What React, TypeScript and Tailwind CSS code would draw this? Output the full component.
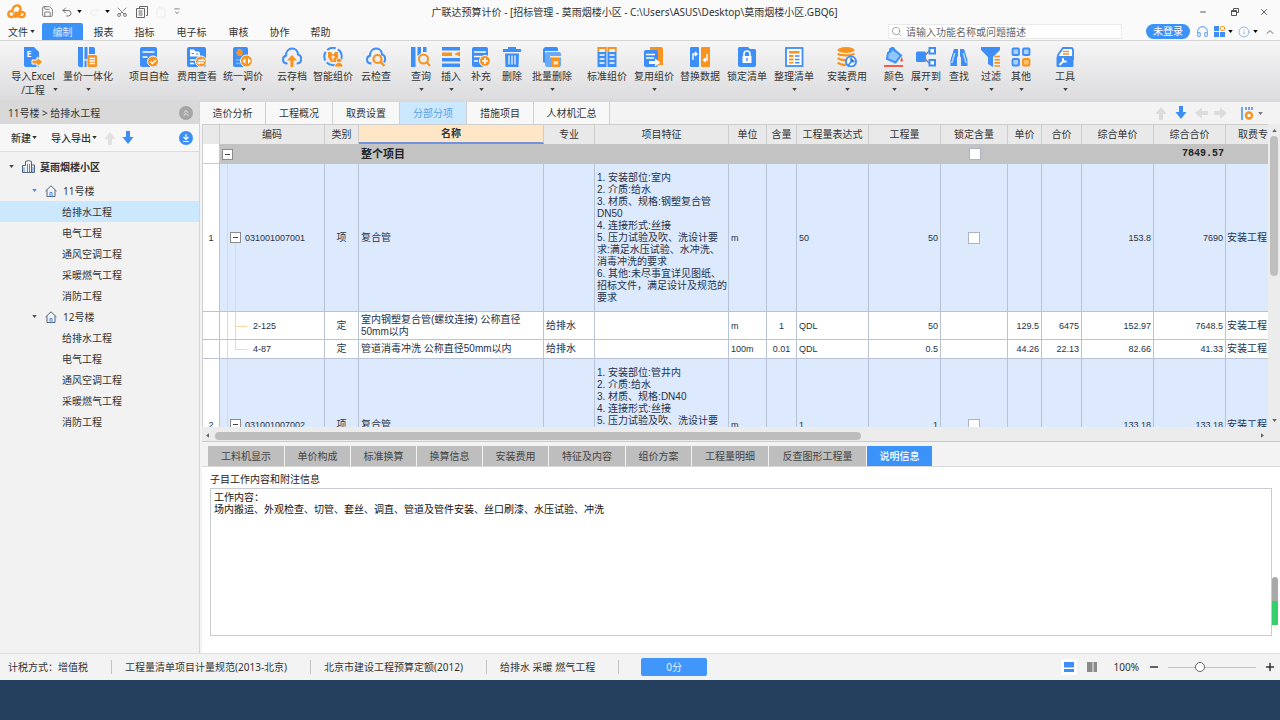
import type { ReactNode } from "react";
import clsx from "clsx";
import { ChevronUp, ChevronsUp, Clipboard, Headphones, Info, Minus, Plus, Redo2, Save, Scissors, Search, Undo2, X } from "lucide-react";

const B = "#3d8ef6";
const O = "#f7931e";

const icons: Record<string, ReactNode> = {
  excel: (
    <>
      <path fill={B} d="M1 0h10l5 5v15H3a2 2 0 0 1-2-2z" />
      <text x="3.500" y="10" fill="#fff" fontSize="9" fontWeight="700">E</text>
      <path fill={O} stroke="#fff" strokeWidth="1" d="M9 13h5v-3l6 5-6 5v-3H9z" />
    </>
  ),
  integrate: (
    <>
      <path fill={B} d="M0 0h5v20H2a2 2 0 0 1-2-2zM6.500 0h3v12h-3zM11 0h4a2 2 0 0 1 2 2v5h-6zM6.500 13.500h2V20h-2z" />
      <rect x="9.500" y="8" width="9.500" height="12" rx="1.500" fill={O} />
      <path stroke="#fff" strokeWidth="1.400" d="M11.500 11.500h5.500M11.500 14h5.500M11.500 16.500h5.500" />
    </>
  ),
  check: (
    <>
      <rect x="1" y="0" width="17" height="20" rx="2" fill={B} />
      <path stroke="#fff" strokeWidth="1.500" d="M3.500 5h12M3.500 10h5" />
      <circle cx="14" cy="14.500" r="5.500" fill={O} stroke="#fff" />
      <path stroke="#fff" strokeWidth="1.500" fill="none" d="m11.500 14.500 2 2 3.500-3.500" />
    </>
  ),
  feeView: (
    <>
      <rect x="0" y="0" width="19" height="20" rx="2" fill={B} />
      <path fill="#fff" d="M3 2.500h4l1.500 2H12l1 2v3H3z" />
      <path stroke={B} d="M4.500 6.500h2.500M9 7h2.500" />
      <path stroke="#fff" strokeWidth="1.300" d="M3 13h5M3 16.500h4" />
      <circle cx="14" cy="14.500" r="5.500" fill={O} stroke="#fff" />
      <path stroke="#fff" strokeWidth="1.300" fill="none" d="M11 13.500h6l-2-1.500M17 15.800h-6l2 1.500" />
    </>
  ),
  adjust: (
    <>
      <rect x="0" y="0" width="15" height="20" rx="2" fill={B} />
      <path fill={O} d="M5 2h3l2 3-1 4H5L3 6z" />
      <path stroke="#7fb6fa" strokeWidth="1.300" d="M3 13h4M3 16.500h4" />
      <circle cx="13.500" cy="14" r="6" fill={O} stroke="#fff" />
      <path fill="#fff" d="m12.500 11-3 3 3 3zM15 11l3 3-3 3z" />
    </>
  ),
  cloudUp: (
    <>
      <path stroke={B} strokeWidth="2" fill="none" d="M5.500 16.500C3 16.500 1 15 1 12.500 1 10.500 2.300 9 4 8.700 4 4.500 6.500 1.500 10.200 1.500c3.300 0 5.600 2.500 5.800 6 2 .4 3.200 2.200 3.200 4.300 0 2.700-1.700 4.700-4.500 4.700" />
      <path fill={O} d="m10 8 5 5.500h-3.500V20h-3v-6.500H5z" />
    </>
  ),
  smart: (
    <>
      <circle cx="10" cy="9.500" r="8.700" stroke={B} strokeWidth="2" fill="none" strokeDasharray="9 2.500" />
      <path fill={O} d="M5 5h3l2 3 2-3h3v5l-2 5H8L5 10z" />
      <path stroke="#fff" d="M8 10h4M10 8.500v5" />
      <circle cx="16" cy="13.500" r="2.500" fill={O} stroke="#fff" strokeWidth=".7" />
      <path fill={O} stroke="#fff" strokeWidth=".7" d="M11.500 20c0-3 2-4.500 4.500-4.500s4 1.500 4 4.500z" />
    </>
  ),
  cloudSearch: (
    <>
      <path stroke={B} strokeWidth="2" fill="none" d="M5.500 16.500C3 16.500 1 15 1 12.500 1 10.500 2.300 9 4 8.700 4 4.500 6.500 1.500 10.200 1.500c3.300 0 5.600 2.500 5.800 6 2 .4 3.200 2.200 3.200 4.300 0 1.500-.5 2.700-1.500 3.500" />
      <circle cx="11.500" cy="12" r="4" stroke={O} strokeWidth="2.200" fill="none" />
      <path stroke={O} strokeWidth="2.400" d="m14.500 15 4 4" />
    </>
  ),
  query: (
    <>
      <path fill={B} d="M0 0h4.500v20H0zM6.500 0h3.500v6l-3.500 3zM12 0h3.500v5H12z" />
      <circle cx="12.500" cy="12" r="4.500" stroke={O} strokeWidth="2" fill="none" />
      <path stroke={O} strokeWidth="2" d="m16 15.500 3 3.500" />
    </>
  ),
  insert: (
    <>
      <path fill={B} d="M1 0h18v3.500H1zM1 11h18v3.500H1zM1 16.500h18V20H1z" />
      <path fill={O} d="M1 5.500h10V9H1zM19 4.500v5l-6-2.500z" />
    </>
  ),
  supplement: (
    <>
      <rect x="1" y="0" width="16" height="20" rx="2" fill={B} />
      <path stroke="#fff" strokeWidth="1.500" d="M3 5h12M3 9.500h7M3 14h4" />
      <circle cx="14" cy="14" r="5.500" fill={O} stroke="#fff" />
      <path stroke="#fff" strokeWidth="1.700" d="M14 11v6M11 14h6" />
    </>
  ),
  trash: (
    <>
      <path fill={B} d="M6 0h8v2h5v3H1V2h5zM3 6.500h14l-.5 13.500h-13z" />
      <path stroke="#d6e7fd" strokeWidth="1.500" d="M7 8.500v9M10 8.500v9M13 8.500v9" />
    </>
  ),
  batchDelete: (
    <>
      <path fill={B} d="M3 0h11a2 2 0 0 1 2 2v2H3v12l-2-1V2z" />
      <rect x="3" y="5" width="16" height="15" rx="2" fill="#6aabf8" />
      <rect x="9" y="10.500" width="9" height="9.500" rx="1" fill={O} />
      <path fill="#ffe6c6" d="M11.500 14h4.500v3.500h-4.500zM8 9h11v1.500H8z" />
    </>
  ),
  standard: (
    <>
      <path fill={B} d="M.500 5H9.500v15H.500zM10.500 5h9v15h-9z" />
      <path stroke={O} strokeWidth="1.800" fill="none" d="M1.300 5V1h7.500v4M11.300 5V1h7.500v4" />
      <path stroke="#fff" strokeWidth="1.600" d="M2.500 8h5M2.500 12h5M2.500 16h5M12.500 8h5M12.500 12h5M12.500 16h5" />
    </>
  ),
  reuse: (
    <>
      <path fill={O} d="M6 0h11a2 2 0 0 1 2 2v16h-5V4H6z" />
      <rect x="0" y="3" width="14" height="17" rx="2" fill={B} />
      <path stroke="#fff" strokeWidth="1.400" d="M2 7.500h9M2 11h8" />
      <path fill="#fff" d="M5 14h6v-2.500l5.500 4-5.500 4V17H5z" />
    </>
  ),
  replace: (
    <>
      <rect x="0" y="0" width="9" height="20" rx="1" fill={B} />
      <rect x="11" y="0" width="9" height="20" rx="1" fill={O} />
      <path stroke="#fff" strokeWidth="1.400" fill="none" d="M3 13V7h3.500M5 5l2 2-2 2M17 7v6h-3.500M15.500 11l-2 2 2 2" />
    </>
  ),
  lock: (
    <>
      <path fill={B} d="M2 0h9l2 2h5l1 1v15a2 2 0 0 1-2 2H3a2 2 0 0 1-2-2V1z" />
      <path fill="#fff" d="M5.500 9h9v7h-9z" />
      <path stroke="#fff" strokeWidth="1.600" fill="none" d="M7 9V7a3 3 0 0 1 6 0v2" />
      <path stroke={B} strokeWidth="1.400" d="M10 11v3" />
    </>
  ),
  arrange: (
    <>
      <rect x="2" y="1" width="16.500" height="18" stroke={B} strokeWidth="1.800" fill="#fff" />
      <path fill={O} d="M5 4h10.500v2.500H5zM5 8h4.500v2H5zM5 11.500h4.500v2H5zM5 15h4.500v1.500H5z" />
      <path stroke={B} strokeWidth="1.500" d="M11 9h4.500M11 12.500h4.500M11 15.800h4.500" />
    </>
  ),
  install: (
    <>
      <ellipse cx="9" cy="3" rx="8.500" ry="3" fill={O} />
      <path stroke={O} strokeWidth="2.300" fill="none" d="M.800 6.500c2 2.500 14 2.500 16.500 0M.800 11c2 2 6 2.200 9 2M.800 15.500c2 2 5 2.500 8 2.500" />
      <circle cx="14" cy="14.500" r="5" stroke={B} strokeWidth="2" fill="#fff" />
      <path stroke={B} strokeWidth="1.800" d="m14.500 14.500-4 4.500M14 11v3.500h3.500" />
    </>
  ),
  color: (
    <>
      <path fill="#8ec8ff" stroke={B} strokeWidth="2" d="m9 2 8 6.500-5.500 7L3 12l1-6z" />
      <path stroke={B} strokeWidth="1.800" fill="none" d="M6 6V2l3-1.500L12 5" />
      <path fill="#f2604b" d="M17.500 10c1 1.500 1.500 2.500 1.500 3.500a1.300 1.300 0 0 1-2.600 0c0-1 .5-2 1.100-3.500zM0 18h19v2H0z" />
    </>
  ),
  expand: (
    <>
      <path stroke="#6d7b8c" strokeWidth="1.200" fill="none" d="M8 9.500 14 3M8 11l6 6" />
      <rect x="0" y="4.500" width="10" height="10.500" rx="1.500" fill={B} />
      <rect x="13.500" y="1" width="5.500" height="5.500" stroke={B} strokeWidth="2" fill="#fff" />
      <rect x="13.500" y="13" width="5.500" height="5.500" stroke={B} strokeWidth="2" fill="#fff" />
    </>
  ),
  find: (
    <>
      <path fill={B} d="M5 2h4v7l-1 2v8H1.500v-6zM11 2h4l3.500 11v6H12v-8l-1-2z" />
      <path fill="#bcd9fb" d="m5 6-3 10h1.500L6.500 6zM15 6l3 10h-1.500L13.500 6z" />
    </>
  ),
  filter: (
    <>
      <path fill={B} d="M0 0h19v3l-7 7v10l-5-3v-7L0 3z" />
      <path stroke={O} strokeWidth="1.600" d="M13.500 9.500H19M13.500 12.700H19M13.500 15.900H19M13.500 19H19" />
    </>
  ),
  other: (
    <>
      <rect x="1.500" y="1.500" width="6.500" height="6.500" rx="1" fill="#a8d1ff" stroke={B} strokeWidth="1.800" />
      <rect x="12" y="1.500" width="6.500" height="6.500" rx="1" fill="#a8d1ff" stroke={B} strokeWidth="1.800" />
      <rect x="1.500" y="12" width="6.500" height="6.500" rx="1" fill="#a8d1ff" stroke={B} strokeWidth="1.800" />
      <rect x="12" y="12" width="6.500" height="6.500" rx="1" fill="#fcbf6b" stroke={O} strokeWidth="1.800" />
    </>
  ),
  tool: (
    <>
      <path stroke={B} strokeWidth="1.800" fill="#fff" d="m3 8 5-7h8a2 2 0 0 1 2 2v9H3z" />
      <path stroke={O} strokeWidth="1.400" d="M8 4.500h6M8 7h6" />
      <rect x="1.500" y="9" width="17" height="11" rx="1.500" fill={B} />
      <path stroke="#fff" strokeWidth="1.800" fill="none" d="m4.500 18 4-4M8 11v3.500h3.500" />
    </>
  ),
};

type Tool = [icon: string, label: string, width: string, caret?: boolean];

const toolGroups: { margin: string; tools: Tool[] }[] = [
  { margin: "ml-2", tools: [["excel", "导入Excel /工程", "w-[50px]", true], ["integrate", "量价一体化", "w-[60px]", true]] },
  { margin: "ml-[7px]", tools: [["check", "项目自检", "w-12"], ["feeView", "费用查看", "w-12"], ["adjust", "统一调价", "w-11", true]] },
  { margin: "ml-[9px]", tools: [["cloudUp", "云存档", "w-9", true], ["smart", "智能组价", "w-[46px]"], ["cloudSearch", "云检查", "w-10"]] },
  {
    margin: "ml-2.5",
    tools: [["query", "查询", "w-[30px]", true], ["insert", "插入", "w-[30px]", true], ["supplement", "补充", "w-[30px]", true], ["trash", "删除", "w-8"], ["batchDelete", "批量删除", "w-12", true]],
  },
  {
    margin: "ml-[7px]",
    tools: [["standard", "标准组价", "w-12"], ["reuse", "复用组价", "w-[46px]", true], ["replace", "替换数据", "w-[46px]"], ["lock", "锁定清单", "w-12"], ["arrange", "整理清单", "w-[46px]", true]],
  },
  { margin: "ml-2", tools: [["install", "安装费用", "w-11", true]] },
  {
    margin: "ml-[9px]",
    tools: [["color", "颜色", "w-8", true], ["expand", "展开到", "w-8", true], ["find", "查找", "w-[34px]"], ["filter", "过滤", "w-[30px]", true], ["other", "其他", "w-[30px]", true]],
  },
  { margin: "ml-3.5", tools: [["tool", "工具", "w-[30px]", true]] },
];

const menus = ["编制", "报表", "指标", "电子标", "审核", "协作", "帮助"];
const pageTabs = ["造价分析", "工程概况", "取费设置", "分部分项", "措施项目", "人材机汇总"];
const detailTabs = ["工料机显示", "单价构成", "标准换算", "换算信息", "安装费用", "特征及内容", "组价方案", "工程量明细", "反查图形工程量", "说明信息"];
const works = ["给排水工程", "电气工程", "通风空调工程", "采暖燃气工程", "消防工程"];

const columns: [title: string, width: string][] = [
  ["", "w-[17px]"],
  ["编码", "w-[105px]"],
  ["类别", "w-[34px]"],
  ["名称", "w-[185px]"],
  ["专业", "w-[51px]"],
  ["项目特征", "w-[134px]"],
  ["单位", "w-[38px]"],
  ["含量", "w-[30px]"],
  ["工程量表达式", "w-[72px]"],
  ["工程量", "w-[72px]"],
  ["锁定含量", "w-[67px]"],
  ["单价", "w-[34px]"],
  ["合价", "w-10"],
  ["综合单价", "w-[72px]"],
  ["综合合价", "w-[72px]"],
  ["取费专业", ""],
];

interface Row {
  no?: string;
  code: string;
  kind: string;
  name: string;
  major?: string;
  feature?: string;
  unit: string;
  content?: string;
  expr: string;
  qty: string;
  price?: string;
  total?: string;
  unitPrice: string;
  sum: string;
  height: string;
}

const rows: Row[] = [
  {
    no: "1", code: "031001007001", kind: "项", name: "复合管", unit: "m", expr: "50", qty: "50", unitPrice: "153.8", sum: "7690", height: "h-[148px]",
    feature: "1. 安装部位:室内\n2. 介质:给水\n3. 材质、规格:钢塑复合管\nDN50\n4. 连接形式:丝接\n5. 压力试验及吹、洗设计要\n求:满足水压试验、水冲洗、\n消毒冲洗的要求\n6. 其他:未尽事宜详见图纸、\n招标文件，满足设计及规范的\n要求",
  },
  { code: "2-125", kind: "定", name: "室内钢塑复合管(螺纹连接) 公称直径\n50mm以内", major: "给排水", unit: "m", content: "1", expr: "QDL", qty: "50", price: "129.5", total: "6475", unitPrice: "152.97", sum: "7648.5", height: "h-7" },
  { code: "4-87", kind: "定", name: "管道消毒冲洗 公称直径50mm以内", major: "给排水", unit: "100m", content: "0.01", expr: "QDL", qty: "0.5", price: "44.26", total: "22.13", unitPrice: "82.66", sum: "41.33", height: "h-[19px]" },
  {
    no: "2", code: "031001007002", kind: "项", name: "复合管", unit: "m", expr: "1", qty: "1", unitPrice: "133.18", sum: "133.18", height: "h-[132px]",
    feature: "1. 安装部位:管井内\n2. 介质:给水\n3. 材质、规格:DN40\n4. 连接形式:丝接\n5. 压力试验及吹、洗设计要\n求:满足水压试验、水冲洗、",
  },
];

function Caret({ className }: { className?: string }) {
  return (
    <svg viewBox="0 0 6 4" className={clsx("h-[3px] w-[5px] shrink-0", className)} fill="currentColor">
      <path d="M0 0h6L3 4z" />
    </svg>
  );
}

function Arrow({ className }: { className?: string }) {
  return (
    <svg viewBox="0 0 12 14" className={clsx("h-3.5 w-3 shrink-0", className)} fill="currentColor">
      <path d="M4 0h4v6h3.500L6 13 .500 6H4z" />
    </svg>
  );
}

function Toggle() {
  return (
    <button aria-label="折叠" className="relative z-10 flex size-[11px] shrink-0 items-center justify-center border border-[#8b8b8b] bg-white">
      <span className="h-px w-[5px] bg-[#444]" />
    </button>
  );
}

function Tick({ label }: { label: string }) {
  return <input type="checkbox" aria-label={label} className="mx-auto block size-3 appearance-none border border-[#a9b4c4] bg-white" />;
}

function TitleBar() {
  return (
    <header className="flex h-[23px] shrink-0 items-center">
      <div className="flex flex-1 items-center text-[#666]">
        <svg viewBox="0 0 19 15" className="ml-[7px] h-[15px] w-[19px]" fill="none" stroke={O} strokeWidth="2.400" strokeLinecap="round">
          <path d="M9 8.500 6.500 12C5 14 1.300 13 1.300 10S4 6.800 5.500 7.500C5 3 8.500 1 11 1.500s3.500 3.500 1.500 6L8.500 13M11 12.500l2.500-3.500c1.500-2 4.300-1 4.300 1.200S15.500 13.500 13.500 13" />
        </svg>
        <button aria-label="保存" className="ml-[15px]"><Save size={13} strokeWidth={1.5} /></button>
        <button aria-label="撤销" className="ml-[7px]"><Undo2 size={12} strokeWidth={1.8} /></button>
        <Caret className="ml-1 text-black" />
        <Redo2 size={11} className="ml-[7px] text-[#ececec]" />
        <Caret className="ml-[5px] text-black" />
        <button aria-label="剪切" className="ml-1.5"><Scissors size={12} strokeWidth={1.6} className="-rotate-90" /></button>
        <button aria-label="复制" className="ml-2">
          <svg viewBox="0 0 12 12" className="size-3" fill="none" stroke="currentColor">
            <path d="M3.500 2V.500h8v9H10M.500 2.500h8v9h-8zM2.500 5h4M2.500 7h4M2.500 9h4" />
          </svg>
        </button>
        <Clipboard size={12} className="ml-[7px] text-[#ececec]" />
        <svg viewBox="0 0 6 8" className="ml-[7px] h-[7px] w-1.5" fill="none" stroke="#777"><path d="M0 1h6M1 4l2 2.500L5 4" /></svg>
      </div>
      <h1 className="text-[10px] whitespace-nowrap text-[#333]">广联达预算计价 - [招标管理 - 莫雨烟楼小区 - C:\Users\ASUS\Desktop\莫雨烟楼小区.GBQ6]</h1>
      <div className="flex flex-1 items-center justify-end pr-[11px] text-[#555]">
        <button aria-label="最小化"><Minus size={8} strokeWidth={3} /></button>
        <button aria-label="还原" className="ml-6">
          <svg viewBox="0 0 8 8" className="size-2" fill="none" stroke="currentColor"><path d="M2.500 2.500v-2h5v4h-2M.500 2.500h5v5h-5zM.500 3.500h5" /></svg>
        </button>
        <button aria-label="关闭" className="ml-5"><X size={10} strokeWidth={2.2} /></button>
      </div>
    </header>
  );
}

function MenuBar() {
  return (
    <nav className="flex h-[18px] shrink-0 items-stretch border-b border-[#d5d5d5]">
      <button className="flex w-[42px] items-center gap-0.5 pl-2">文件<Caret className="h-0.5 w-1" /></button>
      {menus.map((menu) => (
        <button
          key={menu}
          className={clsx(menu === "电子标" ? "w-[53px]" : "w-[41px]", menu === "编制" && "rounded-t-[2px] bg-[#3b92f8] text-[#d8eaff]")}
        >
          {menu}
        </button>
      ))}
      <div className="ml-auto flex items-center pr-1">
        <label className="flex h-[15px] w-[234px] items-center gap-1 border border-[#ebebeb] bg-white pl-0.5 text-[#8a8a8a]">
          <Search size={11} strokeWidth={1.6} />
          <input className="min-w-0 flex-1 outline-none placeholder:text-[#666]" placeholder="请输入功能名称或问题描述" aria-label="搜索" />
        </label>
        <button className="ml-6 h-[15px] w-11 rounded-full bg-[#3b92f8] leading-[15px] text-white">未登录</button>
        <button aria-label="客服" className="ml-[6px] text-[#6fa9ee]"><Headphones size={13} strokeWidth={2} /></button>
        <svg viewBox="0 0 11 11" className="ml-[5px] size-[11px]">
          <path fill={B} d="M0 0h5v5H0zM0 6h5v5H0zM6 6h5v5H6z" />
          <rect x="6.500" y=".500" width="4" height="4" rx="1" fill="none" stroke={O} />
        </svg>
        <Caret className="ml-[3px] text-black" />
        <button aria-label="信息" className="ml-[5px] text-[#7aa9dd]"><Info size={12} strokeWidth={1.6} /></button>
        <Caret className="ml-[3px] text-black" />
        <ChevronUp size={12} className="ml-1.5 text-[#666]" />
      </div>
    </nav>
  );
}

function Ribbon() {
  return (
    <div className="flex h-[61px] shrink-0 items-start overflow-hidden border-b-2 border-[#d9d9d9] bg-gradient-to-b from-[#f6f6f7] to-[#dcdcde] pt-1.5">
      {toolGroups.map((group) => (
        <div key={group.tools[0][0]} className={clsx("flex shrink-0 items-start", group.margin)}>
          {group.tools.map(([icon, label, width, caret]) => (
            <button key={icon} className={clsx("relative flex flex-col items-center text-[#333]", width)}>
              <svg viewBox="0 0 20 20" className="size-5">{icons[icon]}</svg>
              <span className={clsx("mt-0.5 leading-[14px]", icon === "excel" ? "w-[46px]" : "whitespace-nowrap")}>{label}</span>
              {caret && <Caret className={clsx("absolute top-[41px] h-0.5 w-1 text-[#444]", icon === "excel" && "right-0")} />}
            </button>
          ))}
        </div>
      ))}
    </div>
  );
}

function Building({ first }: { first?: boolean }) {
  return (
    <li>
      <button className="flex h-[21px] w-full items-center pl-8">
        <Caret className={first ? "text-[#3b8ef5]" : "text-[#555]"} />
        <svg viewBox="0 0 12 12" className="mr-1.5 ml-2 size-3" fill="none" stroke="#56657a">
          <path d="M.500 6 6 .800 11.500 6M2 5v6.500h8V5" />
          <path stroke={B} d="M5 11.500V7.500h2v4" />
        </svg>
        <span>{first ? "11号楼" : "12号楼"}</span>
      </button>
      <ul>
        {works.map((work, i) => (
          <li key={work}>
            <button className={clsx("block h-[21px] w-full pl-[62px] text-left", first && i === 0 && "bg-[#cce8ff]")}>{work}</button>
          </li>
        ))}
      </ul>
    </li>
  );
}

function Sidebar() {
  return (
    <aside className="flex w-[200px] shrink-0 flex-col border-r border-[#d4d4d4] bg-[#f2f2f3]">
      <div className="flex h-[22px] items-center justify-between bg-[#d9d9da] pr-1.5 pl-2">
        <span>11号楼 &gt; 给排水工程</span>
        <button aria-label="收起" className="flex size-3.5 items-center justify-center rounded-full bg-[#a5a5a5] text-white"><ChevronsUp size={10} /></button>
      </div>
      <div className="flex h-7 items-center border-b border-[#dcdcdc] bg-[#f7f7f8] pr-1.5 pl-[11px]">
        <button className="flex items-center gap-px font-medium">新建<Caret className="h-0.5 w-1" /></button>
        <button className="ml-3.5 flex items-center gap-px font-medium">导入导出<Caret className="h-0.5 w-1" /></button>
        <Arrow className="ml-[7px] rotate-180 text-[#e2e2e2]" />
        <Arrow className="ml-1.5 text-[#3b8ef5]" />
        <button aria-label="下载" className="ml-auto flex size-3.5 items-center justify-center rounded-full bg-[#3b8ef5] text-white">
          <svg viewBox="0 0 8 8" className="size-2" fill="none" stroke="currentColor" strokeWidth="1.200"><path d="M4 0v5M1.500 3 4 5.500 6.500 3M1 7.500h6" /></svg>
        </button>
      </div>
      <button className="flex h-7 items-center pt-px pl-[9px] font-bold">
        <Caret className="text-[#444]" />
        <svg viewBox="0 0 13 13" className="mr-[5px] ml-2 size-[13px]" fill="none" stroke="#56657a">
          <path d="M.500 12.500v-7h3V1.500L6.500.500l3 1v11M9.500 5h3v7.500H.500" />
          <path stroke={B} d="M5.500 4v8M7.500 4v8M2 7.500v5M11 7v5" />
        </svg>
        莫雨烟楼小区
      </button>
      <ul>
        <Building first />
        <Building />
      </ul>
    </aside>
  );
}

function PageTabs() {
  return (
    <div className="flex h-[22px] shrink-0 items-stretch bg-[#f3f3f3]">
      {pageTabs.map((tab, i) => (
        <button
          key={tab}
          className={clsx(
            "border-r border-[#cfcfcf]",
            i === 0 ? "w-[66px]" : tab.length > 4 ? "w-[76px]" : "w-[67px]",
            tab === "分部分项" ? "bg-[#cce8ff] text-[#5b9fe6]" : "bg-[#f8f8f8]",
          )}
        >
          {tab}
        </button>
      ))}
      <div className="ml-auto flex items-center pr-[17px] text-[#dcdcdc]">
        <Arrow className="rotate-180" />
        <Arrow className="ml-2 text-[#3b8ef5]" />
        <Arrow className="ml-2 rotate-90" />
        <Arrow className="ml-2 -rotate-90" />
        <svg viewBox="0 0 13 13" className="ml-[14px] size-[13px]">
          <path stroke={B} strokeWidth="1.500" d="M1 0v13M5 0v3M8 0v3M11 0v3" />
          <circle cx="8" cy="8.500" r="3" fill="#fff" stroke={O} strokeWidth="2.400" />
        </svg>
        <Caret className="ml-1 text-[#777]" />
      </div>
    </div>
  );
}

function QuotaRow({ row, last }: { row: Row; last?: boolean }) {
  const item = Boolean(row.no);
  const cell = "overflow-hidden border-r border-b border-[#b9c3d6] px-0.5 whitespace-pre";
  const number = clsx(cell, "text-right text-[9px]");
  return (
    <tr className={clsx(row.height, item ? "bg-[#dde9fc]" : "bg-white")}>
      <td className={clsx(cell, "bg-white text-center text-[9px]")}>{row.no}</td>
      <td className={clsx(cell, "relative text-[9px]")}>
        <span className="absolute inset-y-0 left-[7px] w-px bg-[#fbd59c]" />
        {item ? (
          <span className="flex items-center gap-1 pl-2">
            <span className="absolute top-1/2 bottom-0 left-[15px] w-px bg-[#fbd59c]" />
            <Toggle />
            {row.code}
          </span>
        ) : (
          <span className="block pl-[31px]">
            <span className={clsx("absolute top-0 left-[15px] w-px bg-[#fbd59c]", last ? "h-1/2" : "h-full")} />
            <span className="absolute top-1/2 left-[15px] h-px w-3 bg-[#fbd59c]" />
            {row.code}
          </span>
        )}
      </td>
      <td className={clsx(cell, "text-center")}>{row.kind}</td>
      <td className={cell}>{row.name}</td>
      <td className={cell}>{row.major}</td>
      <td className={clsx(cell, item && "pt-2 align-top")}>{row.feature}</td>
      <td className={clsx(cell, "text-[9px]")}>{row.unit}</td>
      <td className={clsx(cell, "text-center text-[9px]")}>{row.content}</td>
      <td className={clsx(cell, "text-[9px]")}>{row.expr}</td>
      <td className={number}>{row.qty}</td>
      <td className={cell}>{item && <Tick label={`锁定含量 ${row.code}`} />}</td>
      <td className={number}>{row.price}</td>
      <td className={number}>{row.total}</td>
      <td className={number}>{row.unitPrice}</td>
      <td className={number}>{row.sum}</td>
      <td className="overflow-hidden border-b border-[#b9c3d6] pl-px whitespace-nowrap">安装工程</td>
    </tr>
  );
}

function Grid() {
  return (
    <div className="ml-0.5 flex h-[318px] shrink-0 flex-col border-b border-[#c9c9c9] bg-[#ececec]">
      <div className="flex h-[303px]">
        <div className="min-w-0 flex-1 overflow-hidden border-l border-[#cfcfcf] bg-white">
          <table className="w-full table-fixed border-separate border-spacing-0 leading-3 text-[#26324a] [font-family:'Liberation_Sans','Noto_Sans_CJK_SC',sans-serif]">
            <colgroup>
              {columns.map(([title, width]) => <col key={title} className={width} />)}
            </colgroup>
            <thead>
              <tr className="h-5 bg-[#e9e9ea] text-[#333]">
                {columns.map(([title]) => (
                  <th
                    key={title}
                    className={clsx(
                      "overflow-hidden border-t border-r border-[#cdcdcd] whitespace-nowrap",
                      title === "名称" ? "border-b-2 border-b-[#6f93e0] bg-[#fee6c6] font-bold" : "font-normal",
                      title === "取费专业" && "border-r-0 pl-3 text-left",
                    )}
                  >
                    {title}
                  </th>
                ))}
              </tr>
            </thead>
            <tbody>
              <tr className="h-5 bg-[#c3c3c3] font-bold text-[#222]">
                <td className="border-r border-b border-[#c9c9c9] bg-white" />
                <td className="pl-0.5" colSpan={2}><Toggle /></td>
                <td className="pl-0.5 text-[11px]" colSpan={7}>整个项目</td>
                <td><Tick label="锁定含量 整个项目" /></td>
                <td className="pr-0.5 text-right [font-family:'Liberation_Mono',monospace]" colSpan={4}>7849.57</td>
                <td />
              </tr>
              {rows.map((row, i) => <QuotaRow key={row.code} row={row} last={i === 2} />)}
            </tbody>
          </table>
        </div>
        <div className="flex w-3 flex-col items-center justify-between py-[5px] text-[#666]">
          <Caret className="rotate-180" />
          <div className="mt-1 mb-auto h-[140px] w-2 rounded-full bg-[#bfbfbf]" />
          <Caret />
        </div>
      </div>
      <div className="mt-[3px] flex h-[11px] items-center pr-3 text-[#666]">
        <Caret className="mx-[3px] rotate-90" />
        <div className="flex h-2 flex-1 pl-0.5"><div className="w-[62%] rounded-sm bg-[#bdbdbd]" /></div>
        <Caret className="mx-[3px] -rotate-90" />
      </div>
    </div>
  );
}

function Details() {
  return (
    <section className="relative ml-0.5 flex min-h-0 flex-1 flex-col bg-white">
      <div className="flex h-[25px] shrink-0 items-end gap-px border-b border-[#d9d9d9] bg-[#f3f3f4] pl-1.5">
        {detailTabs.map((tab) => (
          <button
            key={tab}
            className={clsx(
              "h-5 shrink-0",
              tab.length === 7 ? "w-[97px]" : tab.length === 5 ? "w-[76px]" : "w-[65px]",
              tab === "说明信息" ? "bg-[#3b92f8] font-medium text-white" : "bg-[#bebebe] text-[#444]",
            )}
          >
            {tab}
          </button>
        ))}
      </div>
      <label htmlFor="note" className="pt-1 pl-2 leading-4 text-[#222]">子目工作内容和附注信息</label>
      <textarea
        id="note"
        readOnly
        className="mt-px mr-2 mb-[17px] ml-2 flex-1 resize-none border border-[#c8ccd2] px-[3px] py-0.5 leading-3 text-[#111] outline-none"
        defaultValue={"工作内容：\n场内搬运、外观检查、切管、套丝、调直、管道及管件安装、丝口刷漆、水压试验、冲洗"}
      />
      <div className="absolute right-0.5 bottom-7 h-12 w-1.5 rounded-t-full bg-gradient-to-b from-[#a9a9a9] from-50% to-[#35cf6b] to-50%" />
    </section>
  );
}

function StatusBar() {
  const separator = "ml-[23px] h-3.5 w-px bg-[#c4c4c4]";
  return (
    <footer className="flex h-[27px] shrink-0 items-center border-t border-[#dedede] bg-[#f3f3f4] pr-1 pl-2 whitespace-nowrap">
      <span>计税方式：增值税</span>
      <span className={clsx(separator, "mr-[13px]")} />
      <span>工程量清单项目计量规范(2013-北京)</span>
      <span className={clsx(separator, "mr-[13px]")} />
      <span>北京市建设工程预算定额(2012)</span>
      <span className={clsx(separator, "mr-[13px]")} />
      <span>给排水 采暖 燃气工程</span>
      <span className={clsx(separator, "mr-[22px]")} />
      <button className="h-[18px] w-[66px] rounded-[2px] bg-[#4096fa] text-[#e4f0ff]">0分</button>
      <div className="ml-auto flex items-center">
        <button aria-label="上下布局" className="flex size-4 items-center justify-center bg-white">
          <svg viewBox="0 0 10 10" className="size-2.5" fill={B}><path d="M0 0h10v5.500H0zM0 7h10v3H0z" /></svg>
        </button>
        <button aria-label="左右布局" className="ml-[7px] flex size-4 items-center justify-center">
          <svg viewBox="0 0 10 10" className="size-2.5" fill="#8a8a8a"><path d="M0 0h5.500v10H0zM6.500 0H10v10H6.500z" /></svg>
        </button>
        <span className="ml-3.5">100%</span>
        <button aria-label="缩小" className="ml-[9px]"><Minus size={12} strokeWidth={3} /></button>
        <input
          type="range"
          aria-label="缩放"
          min={0}
          max={100}
          defaultValue={34}
          className="ml-2 h-3 w-[88px] appearance-none bg-[linear-gradient(#c2c2c2,#c2c2c2)] bg-[length:100%_1px] bg-center bg-no-repeat [&::-webkit-slider-thumb]:size-2.5 [&::-webkit-slider-thumb]:appearance-none [&::-webkit-slider-thumb]:rounded-full [&::-webkit-slider-thumb]:border [&::-webkit-slider-thumb]:border-[#666] [&::-webkit-slider-thumb]:bg-white"
        />
        <button aria-label="放大" className="ml-2"><Plus size={12} strokeWidth={3} /></button>
      </div>
    </footer>
  );
}

export default function App() {
  return (
    <div className="flex h-screen flex-col bg-[#25405e] text-[10px] leading-[14px] text-[#333] [font-family:'Noto_Sans','Noto_Sans_CJK_SC',sans-serif]">
      <div className="flex min-h-0 flex-1 flex-col bg-[#fafafa]">
        <TitleBar />
        <MenuBar />
        <Ribbon />
        <main className="flex min-h-0 flex-1">
          <Sidebar />
          <div className="flex min-w-0 flex-1 flex-col bg-[#f3f3f4]">
            <PageTabs />
            <Grid />
            <Details />
          </div>
        </main>
        <StatusBar />
      </div>
      <div className="h-10 shrink-0" />
    </div>
  );
}
